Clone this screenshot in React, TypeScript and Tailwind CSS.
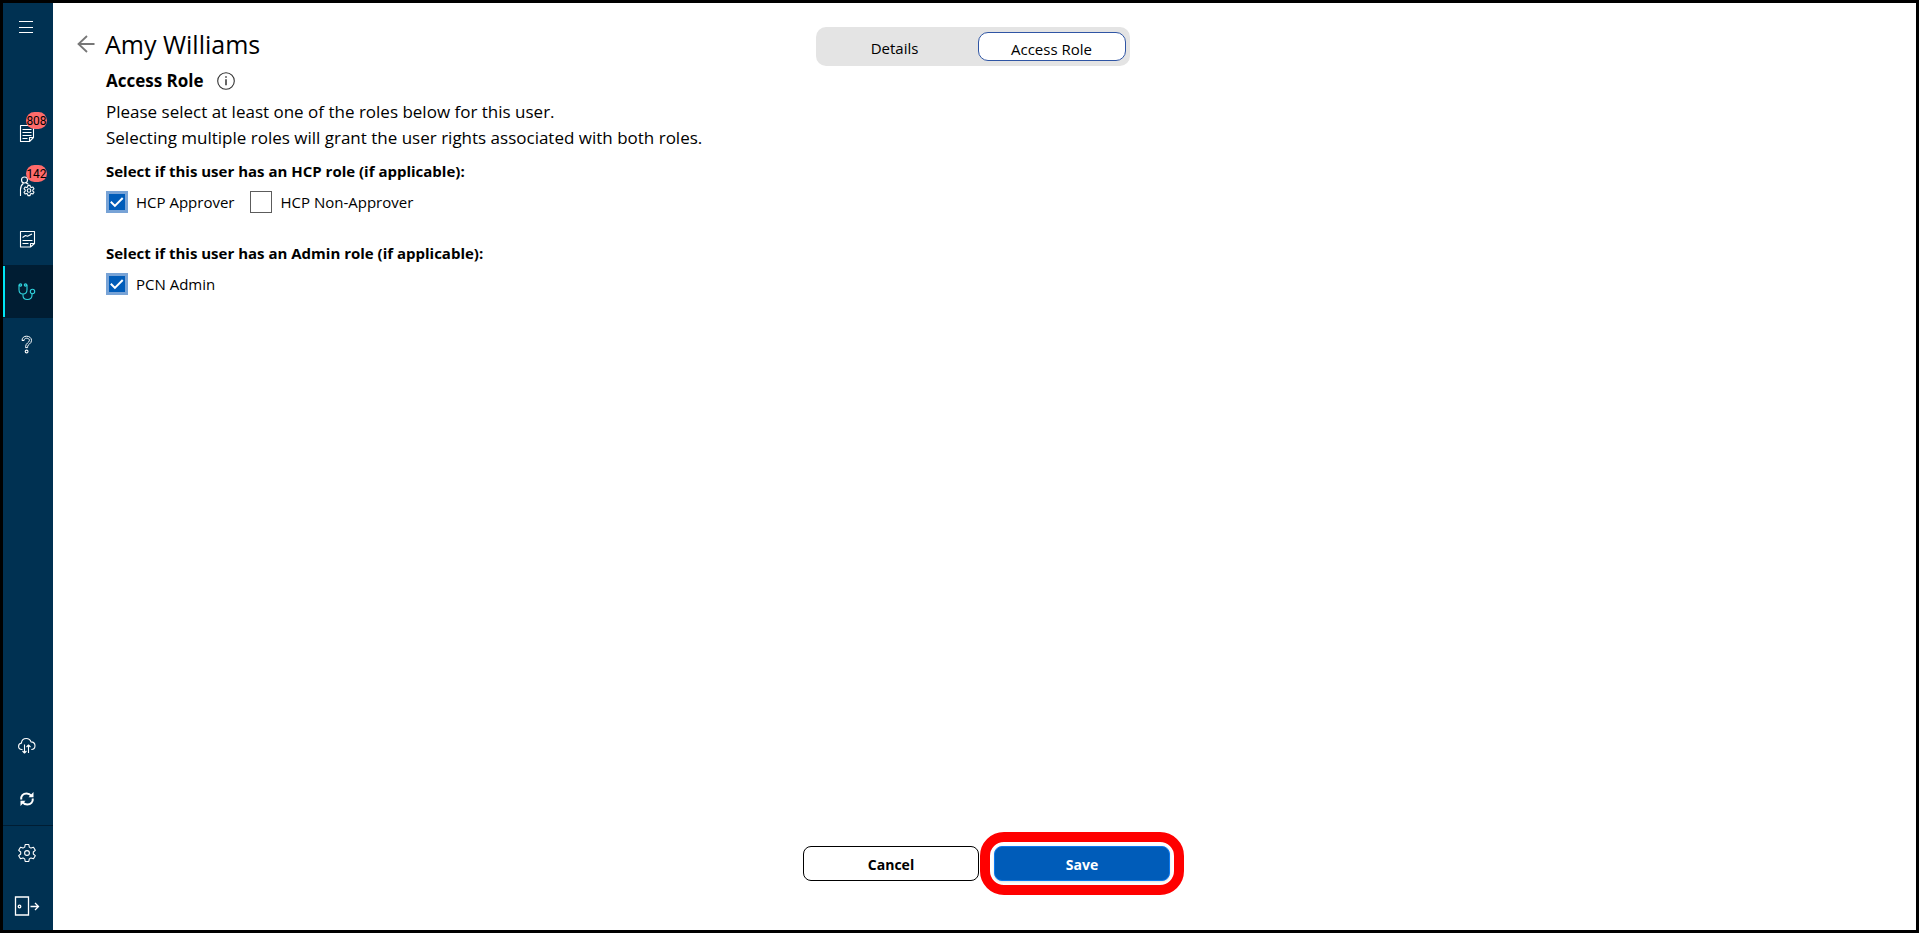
import React, { useState } from 'react';

const NavItem = ({ label, active, badge, children }: any) => (
  <button
    aria-label={label}
    className={`relative flex h-[53px] w-full items-center justify-center pr-0.5 ${active ? 'bg-[#001d33] text-[#2fd3dd]' : 'text-white'}`}>
    {active && <span className="absolute left-0 top-px h-[51px] w-0.5 bg-[#00e5f5]" />}
    {children}
    {badge && (
      <span className="absolute right-1.5 top-1.5 flex h-[17px] w-[21px] items-center justify-center rounded-full bg-[#ff6b6b] font-[Roboto,sans-serif] text-[12px] leading-none text-black">
        {badge}
      </span>
    )}
  </button>
);

const Icon = ({ size = 20, children }: any) => (
  <svg width={size} height={size} viewBox={`0 0 ${size} ${size}`} fill="none" stroke="currentColor" strokeWidth="1.1" strokeLinejoin="round">
    {children}
  </svg>
);

const gear = 'M8.2 1.5h3.6l.5 2.6 1.7 1 2.5-.9 1.8 3.1-2 1.7v2l2 1.7-1.8 3.1-2.5-.9-1.7 1-.5 2.6H8.2l-.5-2.6-1.7-1-2.5.9-1.8-3.1 2-1.7V9l-2-1.7 1.8-3.1 2.5.9 1.7-1z';

const RoleCheckbox = ({ label, checked, onChange }: any) => (
  <label className="flex items-center gap-2 text-[15px] leading-[22px]">
    <span className="relative flex">
      <input type="checkbox" checked={checked} onChange={onChange}
        className="size-[22px] appearance-none border border-[#5c5c5c] bg-white checked:border-3 checked:border-[#78a3d6] checked:bg-[#005cb9]" />
      {checked && (
        <svg className="pointer-events-none absolute inset-0" width="22" height="22" viewBox="0 0 22 22" fill="none" stroke="#fff" strokeWidth="2">
          <path d="M4.8 10.8l4.1 4.1 7.8-7.9" />
        </svg>
      )}
    </span>
    {label}
  </label>
);

const Sidebar = () => (
  <nav className="flex w-[50px] shrink-0 flex-col justify-between bg-[#003152]">
    <div>
      <button aria-label="Menu" className="mb-[53px] flex h-[50px] w-full items-center justify-center pb-0.5 pr-1 text-white">
        <svg width="14" height="14" viewBox="0 0 14 14" stroke="currentColor" strokeWidth="1">
          <path d="M0 1.5h14M0 7.5h14M0 12.5h14" />
        </svg>
      </button>
      <NavItem label="Requests" badge="808">
        <Icon>
          <path d="M3.5 2.5h13v12l-4 4h-9zM16.5 14.500h-4v4M5.500 6.500h9M5.500 9.500h9M5.500 12.500h9M5.500 15.500h5" />
        </Icon>
      </NavItem>
      <NavItem label="User management" badge="142">
        <Icon size={22}>
          <circle cx="8.5" cy="5" r="3" />
          <path d="M4.500 21v-6.500c0-3 1.200-5 3-6.300M10 8c1 .3 1.800.8 2.400 1.400" />
          <g transform="translate(7 9.5) scale(.6)" strokeWidth="1.800">
            <path d={gear} />
            <circle cx="10" cy="10" r="3" />
          </g>
        </Icon>
      </NavItem>
      <NavItem label="Reports">
        <Icon>
          <path d="M3.500 2.500h14v12l-4 3.500h-10zM17.500 14.500h-4V18M5.500 11.500h10M5.500 14.500h6M5.500 8.500l3-2 2 .8 4.500-2.300" />
        </Icon>
      </NavItem>
      <NavItem label="Providers" active>
        <Icon>
          <path d="M4 3H2v4.500c0 3 1.800 4.500 4 4.500s4-1.500 4-4.500V3H8M6 12v1.500c0 2.500 1.800 4 4.300 4s4.700-1.500 4.700-4.200V11.500" />
          <circle cx="3.500" cy="3" r="1.200" />
          <circle cx="8.500" cy="3" r="1.200" />
          <circle cx="15.500" cy="9.500" r="2.200" />
        </Icon>
      </NavItem>
      <NavItem label="Help">
        <Icon>
          <path d="M5 5.500c0-2.800 2-4.300 4.600-4.300s4.900 1.600 4.900 4.200c0 3.600-3.900 3.700-3.900 6.300v.9H8.600v-.9c0-3.700 3.800-4.100 3.800-6.300 0-1.400-1.200-2.200-2.800-2.200S7.100 4.100 7.100 5.500z" strokeWidth="1" />
          <circle cx="9.600" cy="16.500" r="1.400" />
        </Icon>
      </NavItem>
    </div>
    <div className="-mb-0.5">
      <NavItem label="Cloud transfer">
        <Icon>
          <path d="M5.500 13.500H4.800C3 13.500 1.600 12 1.600 10.300c0-1.700 1.200-3 2.800-3.200C4.700 4.300 6.700 2.500 9.300 2.500c2.200 0 4 1.300 4.700 3.400 2.300.1 4 1.700 4 3.900 0 2.100-1.600 3.700-3.700 3.700" />
          <path d="M7.500 8.500v8.500M5.500 15l2 2 2-2M11.500 17V9M9.500 11l2-2 2 2" />
        </Icon>
      </NavItem>
      <NavItem label="Sync">
        <Icon size={18}>
          <path d="M3.200 9.500C2.800 6 5 3.400 8.600 3.400c2 0 3.600.9 4.600 2.200M14.800 8.500c.3 3.500-2 6.100-5.500 6.100-2 0-3.600-.9-4.600-2.200" strokeWidth="2" />
          <path d="M15.500 2v5.200h-5zM2.500 16v-5.200h5z" fill="currentColor" stroke="none" />
        </Icon>
      </NavItem>
      <div className="border-t border-[#001d33]">
        <NavItem label="Settings">
          <Icon>
            <path d={gear} />
            <circle cx="10" cy="10" r="2.400" />
          </Icon>
        </NavItem>
      </div>
      <NavItem label="Log out">
        <svg width="26" height="20" viewBox="0 0 26 20" fill="none" stroke="currentColor" strokeWidth="1.300">
          <path d="M1.500 1h13v18h-13zM16.500 10.500h8M21 7l3.500 3.500L21 14" />
          <circle cx="5.500" cy="10.500" r="1.300" />
        </svg>
      </NavItem>
    </div>
  </nav>
);

export default function App() {
  const [tab, setTab] = useState('Access Role');
  const [roles, setRoles] = useState<any>({ approver: true, nonApprover: false, admin: true });

  const toggle = (key: string) => setRoles({ ...roles, [key]: !roles[key] });

  return (
    <div className="flex min-h-screen border-3 border-black bg-white font-['Open_Sans',sans-serif] text-black">
      <Sidebar />

      <main className="flex flex-1 flex-col">
        {/* Header */}
        <header className="grid grid-cols-[1fr_auto_1fr] items-start pl-6 pr-12 pt-6">
          <div className="flex items-center gap-2.5 pt-px">
            <button aria-label="Back" className="text-[#777]">
              <svg width="18" height="18" viewBox="0 0 18 18" fill="none" stroke="currentColor" strokeWidth="1.800">
                <path d="M17.500 9H1.500M10 1L1.500 9l8.500 8" />
              </svg>
            </button>
            <h1 className="text-[25px] leading-8">Amy Williams</h1>
          </div>
          <div className="flex h-[39px] w-[314px] items-center gap-2 rounded-[10px] bg-[#e4e4e4] px-1 text-[15px]">
            {['Details', 'Access Role'].map(t => (
              <button key={t} onClick={() => setTab(t)}
                className={`h-[29px] leading-5 ${tab === t ? 'w-[148px] rounded-[10px] border border-[#2f55a4] bg-white pt-1' : 'flex-1 pt-0.5'}`}>
                {t}
              </button>
            ))}
          </div>
        </header>

        {/* Roles */}
        <section className="flex-1 pl-[53px] pt-px">
          <div className="flex h-7 items-center gap-[13px]">
            <h2 className="text-[17px] font-bold">Access Role</h2>
            <svg width="18" height="18" viewBox="0 0 18 18" fill="none" stroke="#333" strokeWidth="1.100">
              <circle cx="9" cy="9" r="8.300" />
              <path d="M9 7.200v6M9 4.200v1.500" strokeWidth="1.500" />
            </svg>
          </div>
          <p className="mt-1 text-[17px] leading-[26px]">
            Please select at least one of the roles below for this user.<br />
            Selecting multiple roles will grant the user rights associated with both roles.
          </p>

          <fieldset className="mt-2">
            <legend className="mb-2 text-[15px] font-bold leading-6">Select if this user has an HCP role (if applicable):</legend>
            <div className="flex gap-4">
              <RoleCheckbox label="HCP Approver" checked={roles.approver} onChange={() => toggle('approver')} />
              <RoleCheckbox label="HCP Non-Approver" checked={roles.nonApprover} onChange={() => toggle('nonApprover')} />
            </div>
          </fieldset>

          <fieldset className="mt-7">
            <legend className="mb-2 text-[15px] font-bold leading-6">Select if this user has an Admin role (if applicable):</legend>
            <RoleCheckbox label="PCN Admin" checked={roles.admin} onChange={() => toggle('admin')} />
          </fieldset>
        </section>

        {/* Actions */}
        <footer className="flex justify-center gap-[15px] pb-[49px] pl-1 text-[14px] font-bold">
          <button className="h-[35px] w-44 rounded-lg border border-black bg-white pt-0.5">Cancel</button>
          <div className="relative">
            <button className="h-[35px] w-44 rounded-lg border border-[#0a78f0] bg-[#005cb9] pt-0.5 text-white shadow">Save</button>
            <span className="pointer-events-none absolute -inset-3.5 rounded-3xl border-10 border-[#ff0000]" />
          </div>
        </footer>
      </main>
    </div>
  );
}
